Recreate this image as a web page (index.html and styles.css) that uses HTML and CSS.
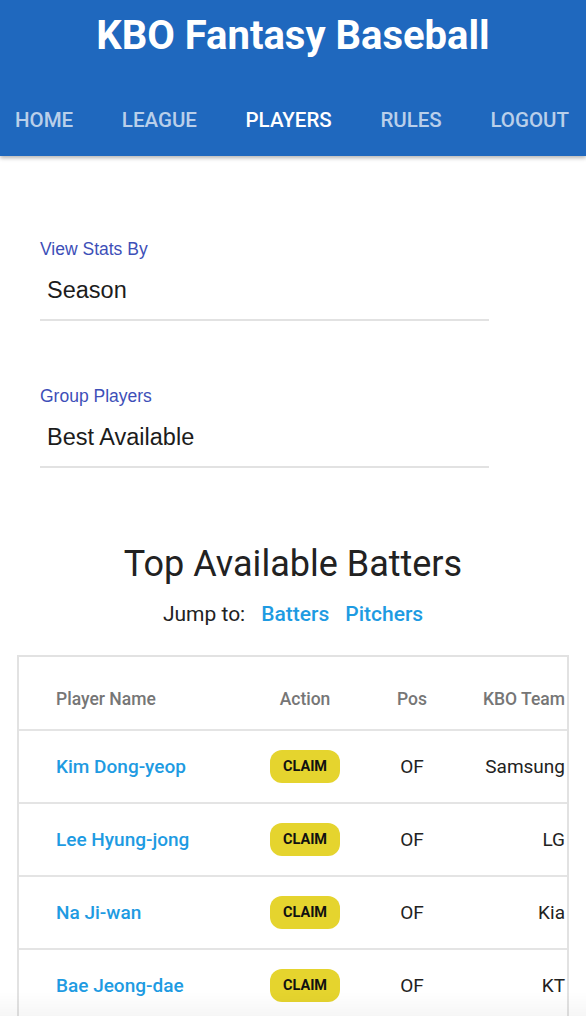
FILE: index.html
```html
<!DOCTYPE html>
<html lang="en">
<head>
<meta charset="utf-8">
<title>KBO Fantasy Baseball</title>
<link rel="stylesheet" href="styles.css">
</head>
<body>
<header class="app-header">
  <h1 class="app-title">KBO Fantasy Baseball</h1>
  <nav class="app-nav">
    <a class="nav-link">HOME</a>
    <a class="nav-link">LEAGUE</a>
    <a class="nav-link active">PLAYERS</a>
    <a class="nav-link">RULES</a>
    <a class="nav-link">LOGOUT</a>
  </nav>
</header>

<main class="content">
  <section class="filters">
    <div class="field">
      <label class="field-label">View Stats By</label>
      <div class="field-value">Season</div>
    </div>
    <div class="field">
      <label class="field-label">Group Players</label>
      <div class="field-value">Best Available</div>
    </div>
  </section>

  <h2 class="section-title">Top Available Batters</h2>
  <p class="jump">Jump to:<a class="jump-link">Batters</a><a class="jump-link">Pitchers</a></p>

  <div class="table-wrap">
    <table class="players">
      <colgroup>
        <col class="c-name"><col class="c-action"><col class="c-pos"><col class="c-team">
      </colgroup>
      <thead>
        <tr>
          <th class="t-name">Player Name</th>
          <th class="t-action">Action</th>
          <th class="t-pos">Pos</th>
          <th class="t-team">KBO Team</th>
        </tr>
      </thead>
      <tbody>
        <tr>
          <td class="t-name"><a class="player-link">Kim Dong-yeop</a></td>
          <td class="t-action"><button class="claim">CLAIM</button></td>
          <td class="t-pos">OF</td>
          <td class="t-team">Samsung</td>
        </tr>
        <tr>
          <td class="t-name"><a class="player-link">Lee Hyung-jong</a></td>
          <td class="t-action"><button class="claim">CLAIM</button></td>
          <td class="t-pos">OF</td>
          <td class="t-team">LG</td>
        </tr>
        <tr>
          <td class="t-name"><a class="player-link">Na Ji-wan</a></td>
          <td class="t-action"><button class="claim">CLAIM</button></td>
          <td class="t-pos">OF</td>
          <td class="t-team">Kia</td>
        </tr>
        <tr>
          <td class="t-name"><a class="player-link">Bae Jeong-dae</a></td>
          <td class="t-action"><button class="claim">CLAIM</button></td>
          <td class="t-pos">OF</td>
          <td class="t-team">KT</td>
        </tr>
      </tbody>
    </table>
  </div>
</main>
<div class="bottom-fade"></div>
</body>
</html>
```
FILE: styles.css
```css
* { box-sizing: border-box; }

html, body {
  margin: 0;
  padding: 0;
  background: #ffffff;
  font-family: Roboto, "Liberation Sans", sans-serif;
  color: #212121;
}

.app-header {
  background: #1f68be;
  height: 156px;
  box-shadow: 0 2px 4px rgba(0, 0, 0, 0.3);
  display: flex;
  flex-direction: column;
}

.app-title {
  margin: 0;
  padding-top: 12px;
  text-align: center;
  font-size: 40px;
  font-weight: 700;
  line-height: 48px;
  color: #ffffff;
}

.app-nav {
  display: flex;
  justify-content: space-between;
  padding: 0 17px 0 15px;
  margin-top: 48px;
}

.nav-link {
  font-size: 20.5px;
  font-weight: 500;
  line-height: 24px;
  color: rgba(255, 255, 255, 0.7);
}

.nav-link.active {
  color: #ffffff;
}

.content {
  padding: 0 17px;
}

.filters {
  padding: 83px 0 0 23px;
  width: 472px;
}

.field {
  margin-bottom: 65px;
}

.field:last-child {
  margin-bottom: 0;
}

.field-label {
  display: block;
  font-family: "Liberation Sans", Arial, sans-serif;
  font-size: 17.5px;
  line-height: 20px;
  color: #3d4fb8;
}

.field-value {
  font-family: "Liberation Sans", Arial, sans-serif;
  font-size: 23.5px;
  line-height: 28px;
  padding: 17px 7px 15px;
  border-bottom: 2px solid #e2e2e2;
  color: #1c1c1c;
}

.section-title {
  margin: 75px 0 0;
  text-align: center;
  font-size: 36px;
  font-weight: 400;
  line-height: 42px;
  color: #222222;
}

.jump {
  margin: 16px 0 0;
  text-align: center;
  font-size: 21px;
  line-height: 26px;
  color: #222222;
}

.jump-link {
  font-weight: 500;
  color: #1e9be2;
  margin-left: 16px;
}

.table-wrap {
  margin-top: 28px;
  border: 2px solid #e2e2e2;
  border-bottom: none;
  overflow: hidden;
}

.players {
  width: 100%;
  border-collapse: collapse;
  table-layout: fixed;
}

.c-name { width: 232px; }
.c-action { width: 108px; }
.c-pos { width: 106px; }
.c-team { width: auto; }

.players th,
.players td {
  height: 73px;
  padding: 0;
  border-bottom: 2px solid #e4e4e4;
}

.players th {
  font-size: 17.5px;
  font-weight: 500;
  color: #767676;
  vertical-align: middle;
  padding-top: 11px;
}

.players td {
  font-size: 19px;
  color: #222222;
  vertical-align: middle;
}

.t-name { text-align: left; padding-left: 37px !important; }
.t-action { text-align: center; }
.t-pos { text-align: center; }
.t-team { text-align: right; padding-right: 2px !important; white-space: nowrap; }

.player-link {
  font-weight: 500;
  color: #1e9be2;
}

.claim {
  width: 70px;
  height: 33px;
  border: none;
  border-radius: 12px;
  background: #e5d42e;
  font-family: Roboto, "Liberation Sans", sans-serif;
  font-size: 14.5px;
  font-weight: 700;
  color: #111111;
  padding: 0;
}

.bottom-fade {
  position: fixed;
  left: 0;
  right: 0;
  bottom: 0;
  height: 24px;
  background: linear-gradient(to bottom, rgba(0, 0, 0, 0), rgba(0, 0, 0, 0.035));
  pointer-events: none;
}
```
